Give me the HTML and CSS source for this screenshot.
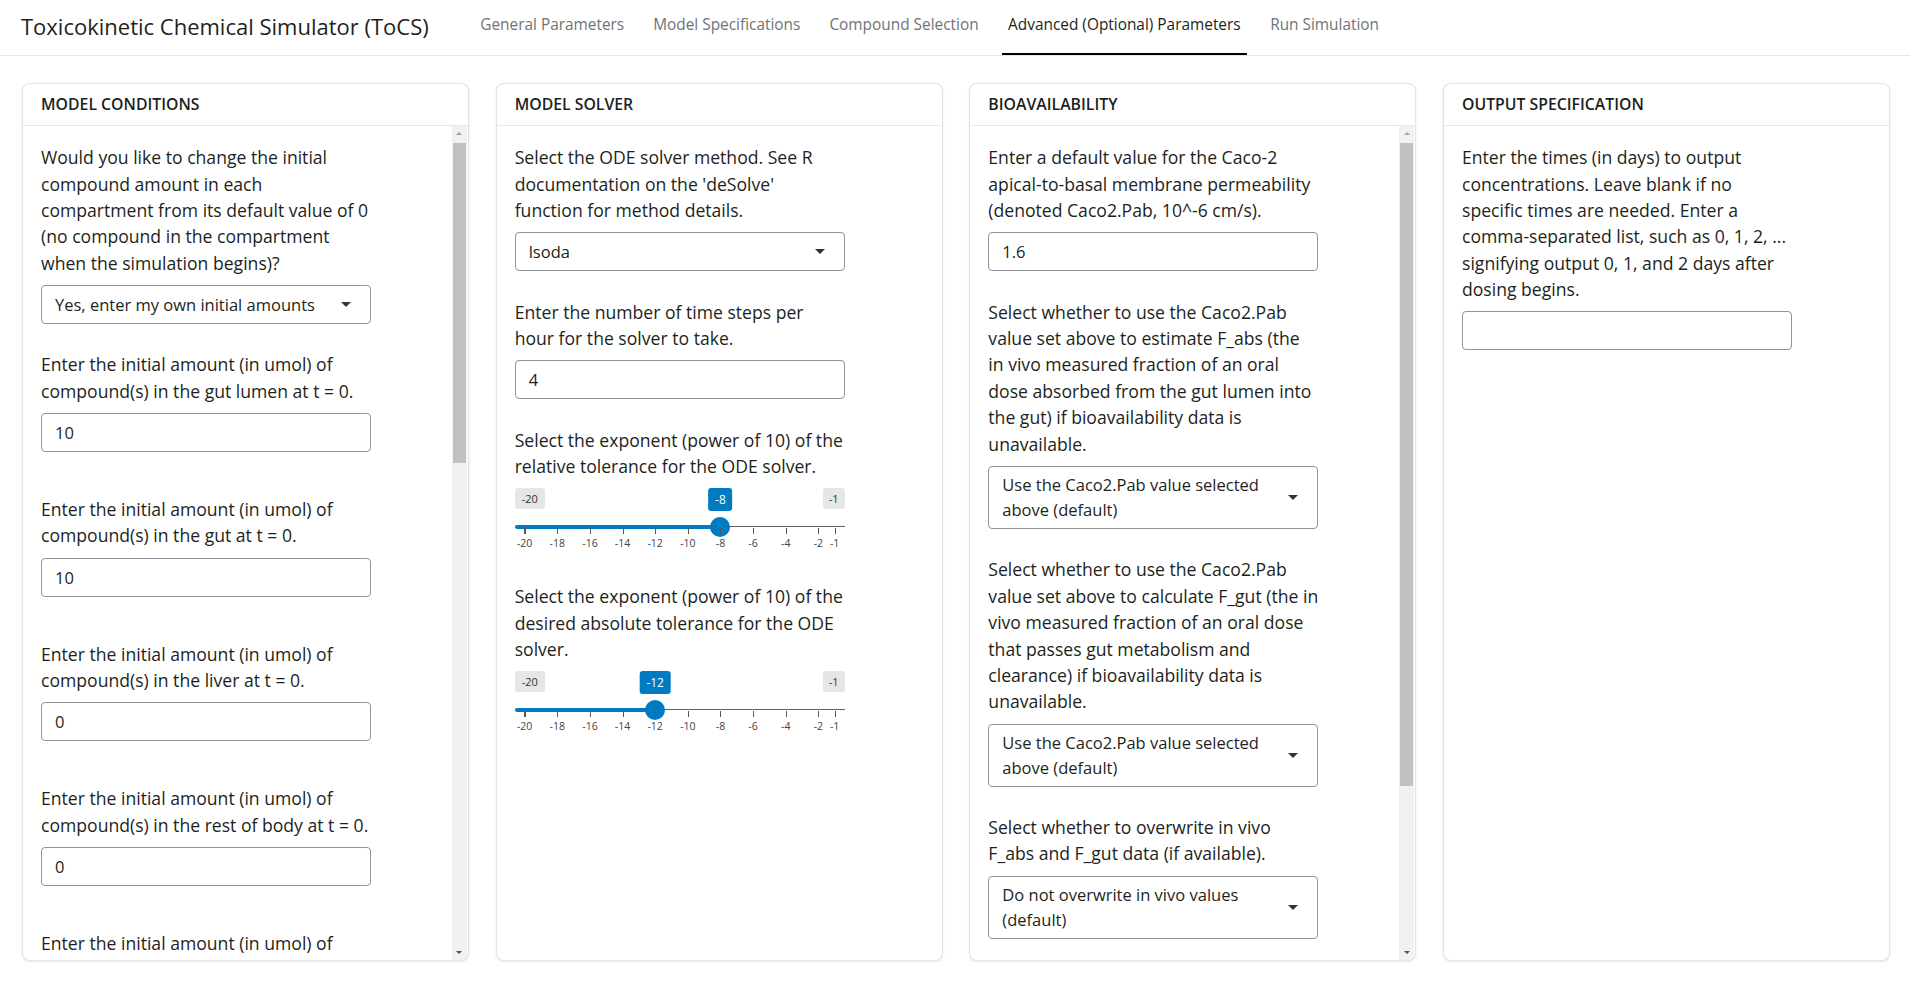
FILE: index.html
```html
<!DOCTYPE html>
<html lang="en">
<head>
<meta charset="utf-8">
<title>Toxicokinetic Chemical Simulator (ToCS)</title>
<link rel="stylesheet" href="styles.css">
</head>
<body>
<nav class="navbar">
  <div class="brand">Toxicokinetic Chemical Simulator (ToCS)</div>
  <ul class="nav">
    <li class="nav-link">General Parameters</li>
    <li class="nav-link">Model Specifications</li>
    <li class="nav-link">Compound Selection</li>
    <li class="nav-link active">Advanced (Optional) Parameters</li>
    <li class="nav-link">Run Simulation</li>
  </ul>
</nav>

<main class="main">
  <section class="card">
    <div class="card-header">Model Conditions</div>
    <div class="body-wrap">
      <div class="card-body">
        <div class="form-group">
          <label class="label">Would you like to change the initial compound amount in each compartment from its default value of 0 (no compound in the compartment when the simulation begins)?</label>
          <div class="select"><span class="select-text">Yes, enter my own initial amounts</span><span class="caret"></span></div>
        </div>
        <div class="form-group spaced">
          <label class="label">Enter the initial amount (in umol) of compound(s) in the gut lumen at t = 0.</label>
          <div class="input">10</div>
        </div>
        <div class="form-group spaced">
          <label class="label">Enter the initial amount (in umol) of compound(s) in the gut at t = 0.</label>
          <div class="input">10</div>
        </div>
        <div class="form-group spaced">
          <label class="label">Enter the initial amount (in umol) of compound(s) in the liver at t = 0.</label>
          <div class="input">0</div>
        </div>
        <div class="form-group spaced">
          <label class="label">Enter the initial amount (in umol) of compound(s) in the rest of body at t = 0.</label>
          <div class="input">0</div>
        </div>
        <div class="form-group spaced">
          <label class="label">Enter the initial amount (in umol) of compound(s) in the kidney at t = 0.</label>
          <div class="input">0</div>
        </div>
      </div>
      <div class="scrollbar">
        <span class="sb-btn sb-up"></span>
        <div class="sb-track"><div class="sb-thumb" style="top: 2px; height: 320px"></div></div>
        <span class="sb-btn sb-down"></span>
      </div>
    </div>
  </section>

  <section class="card">
    <div class="card-header">Model Solver</div>
    <div class="body-wrap">
      <div class="card-body">
        <div class="form-group">
          <label class="label">Select the ODE solver method. See R documentation on the 'deSolve' function for method details.</label>
          <div class="select"><span class="select-text">lsoda</span><span class="caret"></span></div>
        </div>
        <div class="form-group">
          <label class="label">Enter the number of time steps per hour for the solver to take.</label>
          <div class="input">4</div>
        </div>
        <div class="form-group slider-group">
          <label class="label">Select the exponent (power of 10) of the relative tolerance for the ODE solver.</label>
          <div class="irs">
            <span class="irs-min">-20</span>
            <span class="irs-max">-1</span>
            <div class="irs-line"></div>
            <div class="irs-bar" style="width: 205.8px"></div>
            <span class="irs-single" style="left: 205.8px">-8</span>
            <div class="irs-handle" style="left: 205.8px"></div>
            <div class="irs-grid">
              <span class="tick major" style="left: 10px"></span><span class="grid-text" style="left: 10px">-20</span>
              <span class="tick" style="left: 42.6px"></span><span class="grid-text" style="left: 42.6px">-18</span>
              <span class="tick" style="left: 75.3px"></span><span class="grid-text" style="left: 75.3px">-16</span>
              <span class="tick" style="left: 107.9px"></span><span class="grid-text" style="left: 107.9px">-14</span>
              <span class="tick" style="left: 140.5px"></span><span class="grid-text" style="left: 140.5px">-12</span>
              <span class="tick" style="left: 173.2px"></span><span class="grid-text" style="left: 173.2px">-10</span>
              <span class="tick" style="left: 205.8px"></span><span class="grid-text" style="left: 205.8px">-8</span>
              <span class="tick" style="left: 238.4px"></span><span class="grid-text" style="left: 238.4px">-6</span>
              <span class="tick" style="left: 271.1px"></span><span class="grid-text" style="left: 271.1px">-4</span>
              <span class="tick" style="left: 303.7px"></span><span class="grid-text" style="left: 303.7px">-2</span>
              <span class="tick" style="left: 320px"></span><span class="grid-text" style="left: 320px">-1</span>
            </div>
          </div>
        </div>
        <div class="form-group slider-group">
          <label class="label">Select the exponent (power of 10) of the desired absolute tolerance for the ODE solver.</label>
          <div class="irs">
            <span class="irs-min">-20</span>
            <span class="irs-max">-1</span>
            <div class="irs-line"></div>
            <div class="irs-bar" style="width: 140.5px"></div>
            <span class="irs-single" style="left: 140.5px">-12</span>
            <div class="irs-handle" style="left: 140.5px"></div>
            <div class="irs-grid">
              <span class="tick major" style="left: 10px"></span><span class="grid-text" style="left: 10px">-20</span>
              <span class="tick" style="left: 42.6px"></span><span class="grid-text" style="left: 42.6px">-18</span>
              <span class="tick" style="left: 75.3px"></span><span class="grid-text" style="left: 75.3px">-16</span>
              <span class="tick" style="left: 107.9px"></span><span class="grid-text" style="left: 107.9px">-14</span>
              <span class="tick" style="left: 140.5px"></span><span class="grid-text" style="left: 140.5px">-12</span>
              <span class="tick" style="left: 173.2px"></span><span class="grid-text" style="left: 173.2px">-10</span>
              <span class="tick" style="left: 205.8px"></span><span class="grid-text" style="left: 205.8px">-8</span>
              <span class="tick" style="left: 238.4px"></span><span class="grid-text" style="left: 238.4px">-6</span>
              <span class="tick" style="left: 271.1px"></span><span class="grid-text" style="left: 271.1px">-4</span>
              <span class="tick" style="left: 303.7px"></span><span class="grid-text" style="left: 303.7px">-2</span>
              <span class="tick" style="left: 320px"></span><span class="grid-text" style="left: 320px">-1</span>
            </div>
          </div>
        </div>
      </div>
    </div>
  </section>

  <section class="card">
    <div class="card-header">Bioavailability</div>
    <div class="body-wrap">
      <div class="card-body">
        <div class="form-group">
          <label class="label">Enter a default value for the Caco-2 apical-to-basal membrane permeability (denoted Caco2.Pab, 10^-6 cm/s).</label>
          <div class="input">1.6</div>
        </div>
        <div class="form-group">
          <label class="label">Select whether to use the Caco2.Pab value set above to estimate F_abs (the in vivo measured fraction of an oral dose absorbed from the gut lumen into the gut) if bioavailability data is unavailable.</label>
          <div class="select"><span class="select-text">Use the Caco2.Pab value selected above (default)</span><span class="caret"></span></div>
        </div>
        <div class="form-group">
          <label class="label">Select whether to use the Caco2.Pab value set above to calculate F_gut (the in vivo measured fraction of an oral dose that passes gut metabolism and clearance) if bioavailability data is unavailable.</label>
          <div class="select"><span class="select-text">Use the Caco2.Pab value selected above (default)</span><span class="caret"></span></div>
        </div>
        <div class="form-group">
          <label class="label">Select whether to overwrite in vivo F_abs and F_gut data (if available).</label>
          <div class="select"><span class="select-text">Do not overwrite in vivo values (default)</span><span class="caret"></span></div>
        </div>
      </div>
      <div class="scrollbar">
        <span class="sb-btn sb-up"></span>
        <div class="sb-track"><div class="sb-thumb" style="top: 1.5px; height: 643px"></div></div>
        <span class="sb-btn sb-down"></span>
      </div>
    </div>
  </section>

  <section class="card">
    <div class="card-header">Output Specification</div>
    <div class="body-wrap">
      <div class="card-body">
        <div class="form-group">
          <label class="label">Enter the times (in days) to output concentrations. Leave blank if no specific times are needed. Enter a comma-separated list, such as 0, 1, 2, ... signifying output 0, 1, and 2 days after dosing begins.</label>
          <div class="input"></div>
        </div>
      </div>
    </div>
  </section>
</main>
</body>
</html>
```

FILE: styles.css
```css
* { box-sizing: border-box; }

html, body {
  margin: 0;
  padding: 0;
  height: 100%;
}

body {
  font-family: "Open Sans", "DejaVu Sans", sans-serif;
  font-size: 17.6px;
  line-height: 26.4px;
  color: #1d1f21;
  background: #ffffff;
  overflow: hidden;
}

/* ---------- navbar ---------- */
.navbar {
  display: flex;
  align-items: flex-start;
  height: 56px;
  padding-left: 21px;
  border-bottom: 1px solid #e6e6e6;
}

.brand {
  font-size: 22px;
  line-height: 33px;
  margin-top: 9.5px;
  margin-right: 46px;
  color: #1d1f21;
  white-space: nowrap;
}

.nav {
  display: flex;
  gap: 18px;
  list-style: none;
  margin: 0;
  padding: 0;
}

.nav-link {
  font-size: 15.4px;
  line-height: 23.1px;
  height: 54.5px;
  padding: 12.5px 5.5px 0;
  border-bottom: 2px solid transparent;
  color: #6f7377;
  white-space: nowrap;
}

.nav-link.active {
  color: #1d1f21;
  border-bottom-color: #000000;
  padding: 12.5px 6px 0;
}

/* ---------- layout ---------- */
.main {
  display: grid;
  grid-template-columns: repeat(4, 1fr);
  gap: 26.7px;
  padding: 26.7px 20px 0 22px;
}

.card {
  display: flex;
  flex-direction: column;
  height: 878.5px;
  background: #ffffff;
  border: 1px solid rgba(0, 0, 0, 0.11);
  border-radius: 8px;
  box-shadow: 0 1px 3px rgba(0, 0, 0, 0.09);
  overflow: hidden;
}

.card-header {
  padding: 7px 18px 8px;
  font-size: 15.8px;
  line-height: 26.4px;
  font-weight: 600;
  text-transform: uppercase;
  border-bottom: 1px solid rgba(0, 0, 0, 0.09);
  flex: none;
}

.body-wrap {
  position: relative;
  flex: 1;
  min-height: 0;
}

.card-body {
  height: 100%;
  overflow: hidden;
  padding: 18px;
}

/* ---------- scrollbar (drawn) ---------- */
.scrollbar {
  position: absolute;
  top: 0;
  right: 1px;
  bottom: 0;
  width: 15px;
  display: flex;
  flex-direction: column;
  background: #f1f1f1;
}

.sb-btn {
  flex: none;
  height: 15px;
  display: flex;
  align-items: center;
  justify-content: center;
}

.sb-up::after {
  content: "";
  width: 0;
  height: 0;
  border-left: 3.5px solid transparent;
  border-right: 3.5px solid transparent;
  border-bottom: 3.5px solid #a3a3a3;
}

.sb-down::after {
  content: "";
  width: 0;
  height: 0;
  border-left: 3.5px solid transparent;
  border-right: 3.5px solid transparent;
  border-top: 3.5px solid #505050;
}

.sb-track {
  position: relative;
  flex: 1;
}

.sb-thumb {
  position: absolute;
  left: 1px;
  right: 1px;
  background: #c1c1c1;
}

/* ---------- form controls ---------- */
.form-group {
  width: 330px;
  margin-bottom: 27.5px;
}

.form-group.spaced {
  margin-bottom: 44px;
}

.form-group:last-child {
  margin-bottom: 0;
}

.label {
  display: block;
  margin-bottom: 8.8px;
}

.input {
  height: 39px;
  border: 1px solid #8f959b;
  border-radius: 4px;
  padding: 0 13px;
  font-size: 16.5px;
  line-height: 37px;
  color: #1d1f21;
}

.select {
  position: relative;
  display: flex;
  align-items: center;
  min-height: 39px;
  border: 1px solid #8f959b;
  border-radius: 4px;
  padding: 5.3px 42px 5.3px 13px;
  font-size: 16.5px;
  line-height: 25.2px;
  color: #1d1f21;
}

.caret {
  position: absolute;
  right: 19px;
  top: 50%;
  margin-top: -2.5px;
  width: 0;
  height: 0;
  border-left: 5px solid transparent;
  border-right: 5px solid transparent;
  border-top: 5px solid #333333;
}

/* ---------- range slider ---------- */
.slider-group {
  margin-bottom: 27px;
}

.irs {
  position: relative;
  width: 330px;
  height: 68px;
}

.irs-min,
.irs-max {
  position: absolute;
  top: 0;
  height: 21px;
  line-height: 21px;
  font-size: 11px;
  padding: 0 7px;
  background: #e6e6e6;
  border-radius: 3px;
  color: #333333;
}

.irs-min { left: 0; }
.irs-max { right: 0; padding: 0 6px; }

.irs-single {
  position: absolute;
  top: 0;
  height: 23px;
  line-height: 23px;
  font-size: 12px;
  padding: 0 6.5px;
  background: #007bc2;
  color: #ffffff;
  border-radius: 3px;
  transform: translateX(-50%);
}

.irs-line {
  position: absolute;
  left: 0;
  right: 0;
  top: 37.5px;
  height: 1.5px;
  background: #606060;
}

.irs-bar {
  position: absolute;
  left: 0;
  top: 36.5px;
  height: 4px;
  background: #007bc2;
  border-radius: 2px 0 0 2px;
}

.irs-handle {
  position: absolute;
  top: 28.5px;
  width: 20px;
  height: 20px;
  margin-left: -10px;
  border-radius: 50%;
  background: #007bc2;
}

.irs-grid {
  position: absolute;
  left: 0;
  right: 0;
  top: 40px;
  height: 28px;
}

.tick {
  position: absolute;
  top: 0;
  width: 1px;
  height: 6px;
  background: #555555;
}

.tick.major {
  width: 2px;
  margin-left: -0.5px;
}

.grid-text {
  position: absolute;
  top: 8px;
  font-size: 10.5px;
  line-height: 14px;
  color: #444444;
  transform: translateX(-50%);
  white-space: nowrap;
}
```
